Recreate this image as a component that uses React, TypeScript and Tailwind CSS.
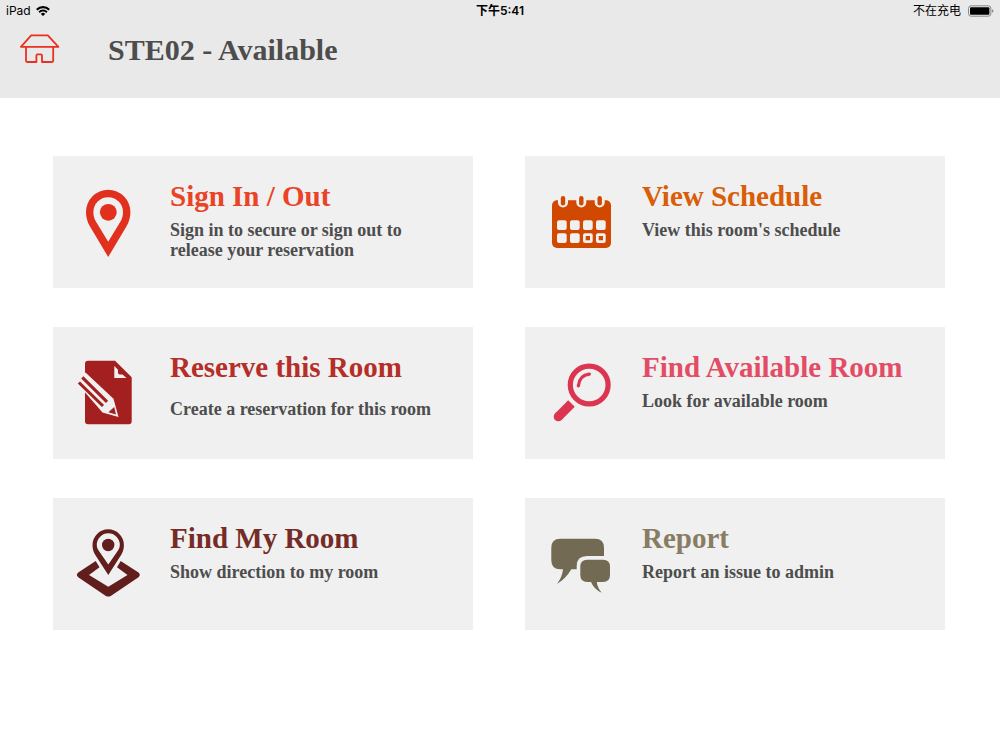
import type { ReactNode } from 'react'
import clsx from 'clsx'

interface IMenuItem {
  title: string
  description: string
  color: string
  icon: ReactNode
  spaced?: boolean
}

function HomeIcon() {
  return (
    <svg
      viewBox="0 0 40 30"
      className="h-[30px] w-10"
      fill="none"
      stroke="#e9311f"
      strokeWidth="1.8"
      strokeLinejoin="round"
      aria-hidden="true"
    >
      <path d="M11.2 1.3h16.6L38.4 12.8H.9z" />
      <path d="M6 12.8v14q0 1.2 1.2 1.2h9.2v-6.4q0-1.2 1.2-1.2h3.2q1.2 0 1.2 1.2V28h10q1.2 0 1.2-1.2v-14" />
    </svg>
  )
}

function WifiIcon() {
  return (
    <svg viewBox="0 0 14 10" className="h-[10px] w-[14px]" fill="none" aria-hidden="true">
      <path d="M.8 3.7a8.8 8.8 0 0 1 12.4 0" stroke="#000" strokeWidth="2.2" />
      <path d="M3.1 6.2a5.5 5.5 0 0 1 7.8 0" stroke="#000" strokeWidth="2" />
      <path d="M7 10 4.8 7.9a3.2 3.2 0 0 1 4.4 0z" fill="#000" />
    </svg>
  )
}

function BatteryIcon() {
  return (
    <svg viewBox="0 0 26 12" className="h-3 w-[26px]" aria-hidden="true">
      <rect x="0.5" y="0.8" width="22.4" height="10.4" rx="2.6" fill="none" stroke="#888" />
      <rect x="2" y="2.2" width="19.4" height="7.6" rx="1" fill="#000" />
      <path d="M24 4.2q1.5.5 1.5 1.8T24 7.8z" fill="#888" />
    </svg>
  )
}

const iconClass = 'h-[72px] w-[72px] shrink-0'

const PinIcon = (
  <svg viewBox="0 0 72 72" className={iconClass} fill="#e2301f" aria-hidden="true">
    <path
      fillRule="evenodd"
      d="M36.2 71 18 40.5C15.2 35.6 14 31.2 14 26a22.2 22.2 0 0 1 44.4 0c0 5.2-1.2 9.6-4 14.5zM36.2 55.7 48.5 35.5c1.8-3.2 2.5-6 2.5-9.5a14.8 14.8 0 0 0-29.6 0c0 3.5.7 6.3 2.5 9.5z"
    />
    <circle cx="36.3" cy="26.3" r="8.4" />
  </svg>
)

const CalendarIcon = (
  <svg viewBox="0 0 72 72" className={iconClass} fill="#d14800" aria-hidden="true">
    <rect x="8" y="14.3" width="59" height="47.7" rx="5" />
    {[19, 37.3, 55.7].map(x => (
      <g key={x} strokeLinecap="round">
        <path d={`M${x} 9v7.5`} stroke="#f0f0f0" strokeWidth="10" />
        <path d={`M${x} 12.3v5`} stroke="#d14800" strokeWidth="4.4" />
      </g>
    ))}
    {[13, 26, 39, 52].map(x => (
      <g key={x} fill="#f0f0f0">
        <rect x={x} y="34.3" width="9.7" height="9.7" rx="2" />
        <rect x={x} y="47.2" width="9.7" height="9.7" rx="2" />
      </g>
    ))}
    <path d="M41.7 49.9h4.3v4.3h-4.3zM54.7 49.9h4.3v4.3h-4.3z" />
  </svg>
)

const NoteIcon = (
  <svg viewBox="0 0 72 72" className={iconClass} fill="#a41f1f" aria-hidden="true">
    <path d="M16 3.7h27l16.7 16.6v44q0 3-3 3H16q-3 0-3-3V6.7q0-3 3-3z" />
    <path d="M42.3 9V21h12.2l-4-3.6h-2.8q-1.7 0-1.7-1.7v-3z" fill="#f0f0f0" />
    <path d="M4 25 13.5 15.5 41.5 41.8 46.5 60 30.5 55.6z" fill="#f0f0f0" />
    <path d="M10.3 20.3 35 44.8M6.9 25.5 31 49" stroke="#a41f1f" strokeWidth="3.1" />
    <path d="M42.2 50 44 57.6 36.4 55.2z" />
  </svg>
)

const SearchIcon = (
  <svg viewBox="0 0 72 72" className={iconClass} fill="none" stroke="#dc3552" aria-hidden="true">
    <circle cx="45.2" cy="28" r="18.9" strokeWidth="5.2" />
    <path d="M34.4 28.8Q35.5 18.3 45.3 17.2" strokeWidth="3.3" strokeLinecap="round" />
    <path d="M27.5 46.5 14.3 59.7" strokeWidth="9.3" />
    <circle cx="14.3" cy="59.7" r="4.65" fill="#dc3552" stroke="none" />
  </svg>
)

const DirectionIcon = (
  <svg viewBox="0 0 72 72" className={iconClass} fill="#621e1c" aria-hidden="true">
    <path
      fillRule="evenodd"
      d="M36.3 47 23 26.5C21.3 23.3 20.5 20.6 20.5 17a15.7 15.7 0 0 1 31.4 0c0 3.6-.8 6.3-2.5 9.5zM36.3 36.5 46 22.5c1.3-2 1.8-3.6 1.8-5.7a11.5 11.5 0 0 0-23 0c0 2.1.5 3.7 1.8 5.7z"
    />
    <circle cx="36.2" cy="17" r="6.2" />
    <path d="M23.7 33 6.2 44.5q-2.6 2.3 0 4.7L33.5 67.7q2.8 1.7 5.6 0L66.5 49.2q2.6-2.4 0-4.7L48.7 33 45 39.3 55.5 47 36.3 58.8 17 47 27.5 39.3z" />
  </svg>
)

const ReportIcon = (
  <svg viewBox="0 0 72 72" className={iconClass} fill="#726a52" aria-hidden="true">
    <path d="M16.3 10.7H51q9 0 9 9V28H43q-10.3 0-10.3 10v3.3h-5.4Q22 50.5 13 56 18.3 49 19 41.3h-2.7q-9 0-9-9V19.7q0-9 9-9z" />
    <path d="M43.3 31.7H59q7 0 7 7V47q0 7-7 7h-6.2Q53.5 60 57.7 64.7 50 61.5 47 54h-3.7q-7 0-7-7v-8.3q0-7 7-7z" />
  </svg>
)

const MENU: IMenuItem[] = [
  {
    title: 'Sign In / Out',
    description: 'Sign in to secure or sign out to release your reservation',
    color: 'text-[#ea4326]',
    icon: PinIcon
  },
  {
    title: 'View Schedule',
    description: "View this room's schedule",
    color: 'text-[#da5d07]',
    icon: CalendarIcon
  },
  {
    title: 'Reserve this Room',
    description: 'Create a reservation for this room',
    color: 'text-[#b52e28]',
    icon: NoteIcon,
    spaced: true
  },
  {
    title: 'Find Available Room',
    description: 'Look for available room',
    color: 'text-[#e24c65]',
    icon: SearchIcon
  },
  {
    title: 'Find My Room',
    description: 'Show direction to my room',
    color: 'text-[#752b26]',
    icon: DirectionIcon
  },
  {
    title: 'Report',
    description: 'Report an issue to admin',
    color: 'text-[#877d62]',
    icon: ReportIcon
  }
]

function MenuCard({ title, description, color, icon, spaced }: IMenuItem) {
  return (
    <button
      type="button"
      className="flex min-h-[132px] items-center gap-[26px] bg-[#f0f0f0] pr-4 pl-[19px] text-left"
    >
      {icon}
      <span className="flex flex-col self-start pt-6">
        <span className={clsx('text-[29px] leading-8 font-bold', color)}>{title}</span>
        <span
          className={clsx(
            'max-w-[270px] text-[18px] leading-5 font-bold text-[#4d4d4d]',
            spaced ? 'mt-4' : 'mt-2'
          )}
        >
          {description}
        </span>
      </span>
    </button>
  )
}

export default function App() {
  return (
    <div className="min-h-screen bg-white font-['Liberation_Serif',serif]">
      <header className="bg-[#e9e9e9] pb-[30px]">
        <div className="grid h-[22px] grid-cols-3 items-center px-[6px] font-['Inter','Noto_Sans_CJK_SC',sans-serif] text-[12px] leading-5 text-black">
          <div className="flex items-center gap-[5px]">
            <span>iPad</span>
            <WifiIcon />
          </div>
          <span className="text-center font-semibold">下午5:41</span>
          <div className="flex items-center justify-end gap-[7px]">
            <span>不在充电</span>
            <BatteryIcon />
          </div>
        </div>
        <div className="flex h-[46px] items-center gap-12 pt-[10px] pl-5">
          <a href="#" aria-label="Home" className="pb-[3px]">
            <HomeIcon />
          </a>
          <h1 className="text-[30px] leading-9 font-bold text-[#4d4d4d]">STE02 - Available</h1>
        </div>
      </header>

      <main className="grid grid-cols-1 gap-x-[52px] gap-y-[39px] pt-[58px] pr-[55px] pb-10 pl-[53px] sm:grid-cols-2">
        {MENU.map(item => (
          <MenuCard
            key={item.title}
            {...item}
          />
        ))}
      </main>
    </div>
  )
}
